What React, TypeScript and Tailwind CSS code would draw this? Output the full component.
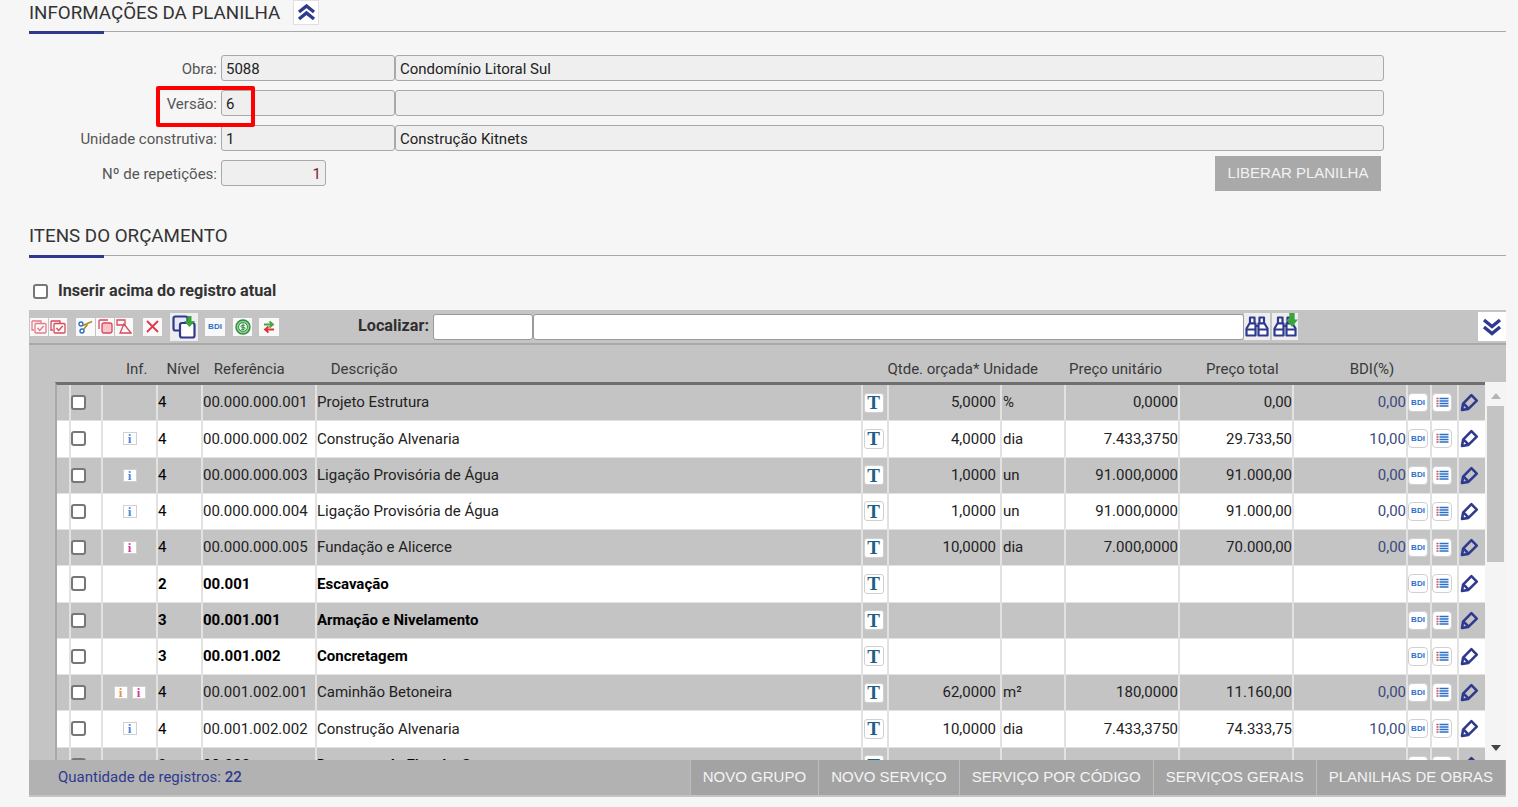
import React from 'react';

type Row = {
  level: string;
  ref: string;
  desc: string;
  bold?: boolean;
  qty?: string;
  unit?: string;
  price?: string;
  total?: string;
  bdi?: string;
  info?: string[];
};

const rows: Row[] = [
  { level: '4', ref: '00.000.000.001', desc: 'Projeto Estrutura', qty: '5,0000', unit: '%', price: '0,0000', total: '0,00', bdi: '0,00' },
  { level: '4', ref: '00.000.000.002', desc: 'Construção Alvenaria', qty: '4,0000', unit: 'dia', price: '7.433,3750', total: '29.733,50', bdi: '10,00', info: ['#4a86d8'] },
  { level: '4', ref: '00.000.000.003', desc: 'Ligação Provisória de Água', qty: '1,0000', unit: 'un', price: '91.000,0000', total: '91.000,00', bdi: '0,00', info: ['#4a86d8'] },
  { level: '4', ref: '00.000.000.004', desc: 'Ligação Provisória de Água', qty: '1,0000', unit: 'un', price: '91.000,0000', total: '91.000,00', bdi: '0,00', info: ['#4a86d8'] },
  { level: '4', ref: '00.000.000.005', desc: 'Fundação e Alicerce', qty: '10,0000', unit: 'dia', price: '7.000,0000', total: '70.000,00', bdi: '0,00', info: ['#d6389a'] },
  { level: '2', ref: '00.001', desc: 'Escavação', bold: true },
  { level: '3', ref: '00.001.001', desc: 'Armação e Nivelamento', bold: true },
  { level: '3', ref: '00.001.002', desc: 'Concretagem', bold: true },
  { level: '4', ref: '00.001.002.001', desc: 'Caminhão Betoneira', qty: '62,0000', unit: 'm²', price: '180,0000', total: '11.160,00', bdi: '0,00', info: ['#dd9440', '#d6389a'] },
  { level: '4', ref: '00.001.002.002', desc: 'Construção Alvenaria', qty: '10,0000', unit: 'dia', price: '7.433,3750', total: '74.333,75', bdi: '10,00', info: ['#4a86d8'] },
  { level: '2', ref: '00.002', desc: 'Despesas de Fiscal e Segurança', bold: true },
];

const BLUE = '#2f3a8f';

const BdiIcon = () => (
  <span className="flex h-[19px] w-[20px] items-center justify-center rounded-[4px] border border-[#d0d0d0] bg-white text-[8px] font-bold leading-none text-[#2a6fc9] font-['Liberation_Sans',sans-serif]">
    BDI
  </span>
);

const ListIcon = () => (
  <span className="flex h-[19px] w-[20px] items-center justify-center rounded-[4px] border border-[#d0d0d0] bg-white">
    <svg width="13" height="11" viewBox="0 0 13 11">
      <path d="M0.5 1.5h2M0.5 4h2M0.5 6.5h2M0.5 9h2" stroke="#c0504d" strokeWidth="1.3" />
      <path d="M3.5 1.5h9M3.5 4h9M3.5 6.5h9M3.5 9h9" stroke="#2a6fc9" strokeWidth="1.3" />
    </svg>
  </span>
);

const PencilIcon = () => (
  <svg width="19" height="19" viewBox="0 0 19 19" fill="none" stroke={BLUE} strokeWidth="2.6" strokeLinejoin="round">
    <path d="M2 17l1.1-6.4L11.4 2.2l5.4 5.4-8.4 8.3z" />
    <path d="M3.6 10.6l4.8 4.8" />
  </svg>
);

const InfoIcon = ({ color }: { color: string }) => (
  <span className="flex h-[13px] w-[14px] items-center justify-center border border-[#d0d0d0] bg-white text-[13px] font-bold leading-none font-['Liberation_Serif',serif]" style={{ color }}>
    i
  </span>
);

const TIcon = () => (
  <span className="flex h-[20px] w-[20px] items-center justify-center rounded-[3px] border border-[#d0d0d0] bg-white text-[19px] font-bold leading-none text-[#1f5f86] font-['Liberation_Serif',serif]">
    T
  </span>
);

const ToolBox = ({ children, className = 'w-[18px] h-[18px] bg-white/90' }: { children: React.ReactNode; className?: string }) => (
  <span className={`flex items-center justify-center ${className}`}>{children}</span>
);

const CopyCheck = ({ light }: { light?: boolean }) => (
  <svg width="16" height="14" viewBox="0 0 16 14" fill="none" stroke={light ? '#e57b8a' : '#d9485c'} strokeWidth="1.3">
    <path d="M1 1h9v2M1 1v9h2" />
    <rect x="4" y="3.5" width="11" height="9.5" rx="1" />
    <path d="M6.5 8l2.2 2.4 4-4.4" strokeWidth="1.4" />
  </svg>
);

const Binoculars = () => (
  <svg width="24" height="21" viewBox="0 0 24 21" fill="#fff" stroke={BLUE} strokeWidth="2.2" strokeLinejoin="round">
    <path d="M5 1.5h4.5v6H5zM14.5 1.5H19v6h-4.5z" />
    <path d="M4.5 7.5h6v12h-9v-7z" />
    <path d="M19.5 7.5h-6v12h9v-7z" />
    <path d="M10.5 10h3M1.5 13.5h9M13.5 13.5h9" />
  </svg>
);

const Toolbar = () => (
  <div className="flex h-[35px] items-center border-b-2 border-[#a8a8a8] bg-[#c4c4c4]">
    <div className="ml-[1px] flex items-center gap-[1px]">
      <ToolBox><CopyCheck light /></ToolBox>
      <ToolBox><CopyCheck /></ToolBox>
      <ToolBox className="ml-[8px] w-[19px] h-[18px] bg-white/90">
        <svg width="15" height="14" viewBox="0 0 15 14" fill="none">
          <circle cx="3" cy="4" r="2" stroke="#2a6fc9" strokeWidth="1.4" />
          <circle cx="4" cy="11" r="2" stroke="#2a6fc9" strokeWidth="1.4" />
          <path d="M5 5.5l9-4M5.5 9.5l4-5" stroke="#b58a2a" strokeWidth="1.6" />
        </svg>
      </ToolBox>
      <ToolBox>
        <svg width="15" height="15" viewBox="0 0 15 15" fill="none" stroke="#d9485c" strokeWidth="1.3">
          <path d="M1 10V2a1 1 0 0 1 1-1h8" />
          <rect x="4" y="4" width="10" height="10" rx="2" fill="#f7c4ca" />
        </svg>
      </ToolBox>
      <ToolBox>
        <svg width="16" height="15" viewBox="0 0 16 15" fill="none" stroke="#d9485c" strokeWidth="1.3">
          <path d="M1 1h8v5H1z" />
          <path d="M8 5l-4 9h11z" />
        </svg>
      </ToolBox>
      <ToolBox className="ml-[9px] w-[19px] h-[18px] bg-white/90">
        <svg width="13" height="13" viewBox="0 0 13 13" stroke="#e2384a" strokeWidth="1.8">
          <path d="M1 1l11 11M12 1L1 12" />
        </svg>
      </ToolBox>
      <ToolBox className="ml-[7px] w-[28px] h-[28px] bg-[#eeeeee]">
        <svg width="24" height="24" viewBox="0 0 24 24" fill="none" stroke={BLUE} strokeWidth="2.2">
          <rect x="1.5" y="1.5" width="14" height="14" rx="2" fill="#e8e8f0" />
          <rect x="8" y="8" width="14.5" height="14.5" rx="2" fill="#fff" />
          <path d="M15.5 1h4v5H23l-5.5 6-5.5-6h3.5z" fill="#3aa63a" stroke="none" />
        </svg>
      </ToolBox>
      <ToolBox className="ml-[6px] w-[20px] h-[18px] bg-white/90">
        <span className="text-[8px] font-bold leading-none text-[#2a6fc9] font-['Liberation_Sans',sans-serif]">BDI</span>
      </ToolBox>
      <ToolBox className="ml-[7px] w-[19px] h-[18px] bg-white/90">
        <svg width="16" height="16" viewBox="0 0 16 16">
          <circle cx="8" cy="8" r="7" fill="#8ed08e" stroke="#2e8b3d" strokeWidth="1.4" />
          <circle cx="8" cy="8" r="4.4" fill="#fff" stroke="#2e8b3d" />
          <path d="M8 4.5v7M10 6.3H7a1 1 0 0 0 0 2h2a1 1 0 0 1 0 2H6" stroke="#2e8b3d" fill="none" />
        </svg>
      </ToolBox>
      <ToolBox className="ml-[6px] w-[20px] h-[18px] bg-white/90">
        <svg width="14" height="14" viewBox="0 0 14 14" fill="none" strokeWidth="1.8">
          <path d="M2 4.5h8M7.5 1.5l3.5 3-3.5 3" stroke="#46a83c" />
          <path d="M12 9.5H4M6.5 6.5L3 9.5l3.5 3" stroke="#e5303a" />
        </svg>
      </ToolBox>
    </div>
    <span className="ml-[79px] w-[71px] whitespace-nowrap text-[16.2px] font-bold text-[#2f2f2f]">Localizar:</span>
    <input readOnly className="ml-[4px] h-[26px] w-[100px] rounded-[3px] border border-[#9a9a9a] bg-white" />
    <input readOnly className="h-[26px] w-[711px] rounded-[3px] border border-[#9a9a9a] bg-white" />
    <ToolBox className="h-[27px] w-[26px] bg-[#eeeeee]">
      <Binoculars />
    </ToolBox>
    <ToolBox className="ml-[2px] h-[27px] w-[26px] bg-[#eeeeee]">
      <span className="relative flex">
        <Binoculars />
        <svg className="absolute -right-[1px] -top-[3px]" width="12" height="14" viewBox="0 0 11 13">
          <path d="M3 0h5v6h3l-5.5 7L0 6h3z" fill="#3aa63a" />
        </svg>
      </span>
    </ToolBox>
    <ToolBox className="ml-auto h-[29px] w-[28px] bg-white">
      <svg width="20" height="18" viewBox="0 0 20 18" fill="none" stroke={BLUE} strokeWidth="3.4">
        <path d="M2 2l8 6.5L18 2M2 9l8 6.5L18 9" />
      </svg>
    </ToolBox>
  </div>
);

const cols = 'grid grid-cols-[12px_32px_55px_45px_114px_546px_26px_113px_64px_114px_114px_114px_24px_27px_28px]';
const cell = 'flex items-center border-l-2 border-[#e2e2e2] overflow-hidden whitespace-nowrap';

const TableRow = ({ row, even }: { row: Row; even: boolean }) => (
  <div className={`${cols} h-[36.26px] shrink-0 border-b-[1px] border-[#e2e2e2] text-[15px] ${even ? 'bg-[#c4c4c4]' : 'bg-white'} ${row.bold ? 'font-bold text-black' : 'text-[#222]'}`}>
    <div />
    <div className={cell}>
      <input type="checkbox" readOnly className="h-[15px] w-[15px] appearance-none rounded-[3px] border-2 border-[#777] bg-white" />
    </div>
    <div className={`${cell} justify-center gap-[4px]`}>
      {row.info?.map((c, i) => <InfoIcon key={i} color={c} />)}
    </div>
    <div className={`${cell} text-black`}>{row.level}</div>
    <div className={cell}>{row.ref}</div>
    <div className={cell}>{row.desc}</div>
    <div className={`${cell} pl-[0.5px]`}><TIcon /></div>
    <div className={`${cell} justify-end pr-[4px]`}>{row.qty}</div>
    <div className={`${cell} pl-[1px]`}>{row.unit}</div>
    <div className={`${cell} justify-end`}>{row.price}</div>
    <div className={`${cell} justify-end`}>{row.total}</div>
    <div className={`${cell} justify-end text-[#3b4a80]`}>{row.bdi}</div>
    <div className={cell}><BdiIcon /></div>
    <div className={cell}><ListIcon /></div>
    <div className={`${cell} pl-[1px]`}><PencilIcon /></div>
  </div>
);

const SectionTitle = ({ title, children, className = '' }: { title: string; children?: React.ReactNode; className?: string }) => (
  <div className="relative flex h-[32px] items-start gap-[13px] border-b border-[#a9a9a9]">
    <span className={`text-[18.75px] leading-[24px] text-[#333] ${className}`}>{title}</span>
    {children}
    <span className="absolute -bottom-[3px] left-0 h-[3px] w-[75px] bg-[#2f3a8f]" />
  </div>
);

const fieldClass = 'h-[26px] rounded-[3px] border border-[#a9a9a9] bg-[#efefef] px-[4px] text-[15px] leading-[26px] text-[#222]';
const labelClass = 'w-[192px] pr-[4px] pt-[2px] text-right text-[15px] text-[#555]';

const FormRow = ({ label, code, name }: { label: string; code: string; name: string }) => (
  <div className="flex h-[26px] items-center">
    <span className={labelClass}>{label}</span>
    <div className={`${fieldClass} w-[174px]`}>{code}</div>
    <div className={`${fieldClass} w-[989px]`}>{name}</div>
  </div>
);

export default function App() {
  return (
    <div className="h-[807px] w-[1518px] overflow-hidden bg-[#f6f6f6] font-['Roboto',sans-serif]">
      <div className="ml-[29px] mr-[12px]">
        <SectionTitle title="INFORMAÇÕES DA PLANILHA" className="pt-[1px]">
          <span className="flex h-[25px] w-[26px] items-center justify-center border border-[#e0e0e0] bg-white">
            <svg width="19" height="17" viewBox="0 0 19 17" fill="none" stroke={BLUE} strokeWidth="3.4">
              <path d="M2 8l7.5-6L17 8M2 15l7.5-6L17 15" />
            </svg>
          </span>
        </SectionTitle>

        <div className="relative mt-[23px] flex flex-col gap-[9px]">
          <FormRow label="Obra:" code="5088" name="Condomínio Litoral Sul" />
          <FormRow label="Versão:" code="6" name="" />
          <FormRow label="Unidade construtiva:" code="1" name="Construção Kitnets" />
          <div className="flex h-[26px] items-center">
            <span className={labelClass}>Nº de repetições:</span>
            <div className={`${fieldClass} w-[105px] text-right !text-[#7a1f1f]`}>1</div>
            <button className="ml-[889px] h-[35px] w-[166px] bg-[#a9a9a9] text-[15px] text-[#f2f2f2] font-['Liberation_Sans',sans-serif]">LIBERAR PLANILHA</button>
          </div>
          <span className="absolute left-[127px] top-[31px] h-[41px] w-[99px] rounded-[2px] border-[4px] border-[#ff0000]" />
        </div>

        <div className="mt-[38px]">
          <SectionTitle title="ITENS DO ORÇAMENTO" />
        </div>

        <label className="mt-[27px] ml-[4px] flex h-[16px] items-center gap-[10px] whitespace-nowrap pt-[1px] text-[16.2px] font-bold text-[#333]">
          <input type="checkbox" readOnly className="h-[15px] w-[15px] appearance-none rounded-[3px] border-2 border-[#777] bg-white" />
          Inserir acima do registro atual
        </label>

        <div className="mt-[11px]">
          <Toolbar />

          <div className="flex h-[37px] items-center bg-[#c4c4c4] pt-[11px] text-[15px] text-[#3a3a3a]">
            <span className="ml-[97px]">Inf.</span>
            <span className="ml-[19px]">Nível</span>
            <span className="ml-[14px]">Referência</span>
            <span className="ml-[46px]">Descrição</span>
            <span className="ml-[490px]">Qtde. orçada*</span>
            <span className="ml-[4px]">Unidade</span>
            <span className="ml-[31px]">Preço unitário</span>
            <span className="ml-[44px]">Preço total</span>
            <span className="ml-[71px]">BDI(%)</span>
          </div>

          <div className="flex h-[378px] bg-[#c4c4c4] pl-[26px]">
            <div className="flex h-full flex-1 flex-col overflow-hidden border-t-[3px] border-l-2 border-[#6f6f6f] [border-left-color:#a8a8a8]">
              {rows.map((r, i) => <TableRow key={r.ref} row={r} even={i % 2 === 0} />)}
            </div>
            <div className="flex w-[21px] flex-col items-center bg-[#f4f4f4] pt-[3px]">
              <span className="mt-[8px] h-0 w-0 border-x-[5px] border-b-[6px] border-x-transparent border-b-[#b5b5b5]" />
              <span className="mt-[7px] h-[156px] w-[17px] bg-[#c4c4c4]" />
              <span className="mt-auto mb-[9px] h-0 w-0 border-x-[5px] border-t-[6px] border-x-transparent border-t-[#444]" />
            </div>
          </div>

          <div className="flex h-[37px] items-center border-b-[2px] border-[#c4c4c4] bg-[#b2b2b2]">
            <span className="ml-[29px] text-[15px] text-[#2f3a8f]">
              Quantidade de registros: <span className="font-medium">22</span>
            </span>
            <div className="ml-auto mr-[1px] flex h-full text-[15px] text-[#f4f4f4] font-['Liberation_Sans',sans-serif]">
              {['NOVO GRUPO', 'NOVO SERVIÇO', 'SERVIÇO POR CÓDIGO', 'SERVIÇOS GERAIS', 'PLANILHAS DE OBRAS'].map((b) => (
                <span key={b} className="flex items-center border-l border-[#bdbdbd] bg-[#a3a3a3] px-[12px]">{b}</span>
              ))}
            </div>
          </div>
        </div>
      </div>
    </div>
  );
}
